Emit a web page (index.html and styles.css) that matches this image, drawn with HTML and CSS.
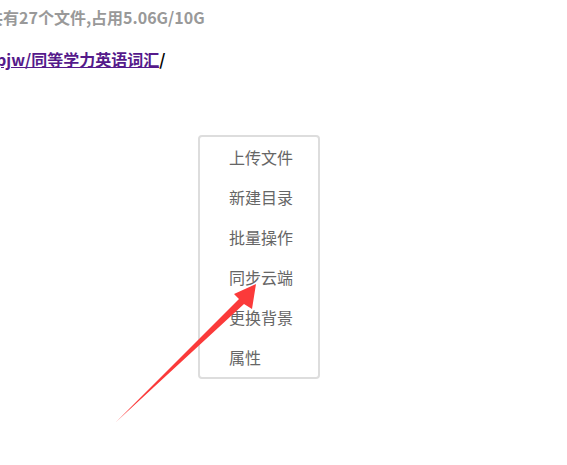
FILE: index.html
```html
<!DOCTYPE html>
<html>
    <head>
        <meta charset='UTF-8'>
        <link rel="stylesheet" href="styles.css">
    </head>
    <body>
        <div class="info">共有27个文件,占用5.06G/10G</div>
        <div class="path"><a href="#">pjw/同等学力英语词汇</a>/</div>

        <div class="menu">
            <div class="item">上传文件</div>
            <div class="item">新建目录</div>
            <div class="item">批量操作</div>
            <div class="item">同步云端</div>
            <div class="item">更换背景</div>
            <div class="item">属性</div>
        </div>

        <svg class="arrow" width="567" height="465" viewBox="0 0 567 465">
            <polygon points="256,284 252,309 244,304 116,422 239,299 234,294" fill="#fb3a3a"></polygon>
        </svg>
    </body>
</html>
```

FILE: styles.css
```css
html, body {
    width: 100%;
    height: 100%;
}

body {
    margin: 0;
    padding: 0;
    background: #fff;
    font-family: 'Noto Sans CJK SC', 'Microsoft YaHei', sans-serif;
    overflow: hidden;
}

.info {
    margin: 6px 0 0 -13px;
    height: 22px;
    line-height: 22px;
    font-size: 16px;
    font-weight: bold;
    color: #999;
}

.path {
    margin: 19px 0 0 -4px;
    height: 24px;
    line-height: 24px;
    font-size: 16px;
    font-weight: bold;
    color: #000;
}

.path a {
    color: #551a8b;
}

.menu {
    width: 118px;
    margin: 64px 0 0 198px;
    border: 2px solid #ddd;
    border-radius: 4px;
}

.item {
    height: 40px;
    line-height: 40px;
    padding-left: 29px;
    font-size: 16px;
    color: #666;
}

.arrow {
    position: absolute;
    left: 0;
    top: 0;
}
```
